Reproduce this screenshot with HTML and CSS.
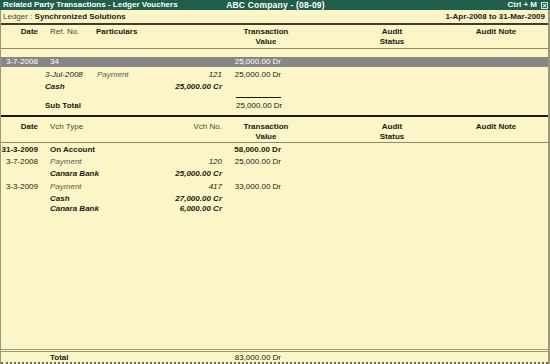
FILE: index.html
```html
<!DOCTYPE html>
<html lang="en">
<head>
	<meta charset="UTF-8">
	<title>Related Party Transactions - Ledger Vouchers</title>
	<link rel="stylesheet" href="styles.css">
</head>
<body>
	<div class="screen">
		<div class="titlebar">
			<span class="t_left">Related Party Transactions - Ledger Vouchers</span>
			<span class="t_mid">ABC Company - (08-09)</span>
			<span class="t_right">Ctrl + M <span class="close">&times;</span></span>
		</div>
		<div class="frame">
			<div class="ledger">
				<span><span class="lbl">Ledger :</span> <b>Synchronized Solutions</b></span>
				<b>1-Apr-2008 to 31-Mar-2009</b>
			</div>

			<!-- 表头1 -->
			<div class="row head">
				<div class="c_date">Date</div>
				<div class="c_ref pl8 light">Ref. No.</div>
				<div class="c_part">Particulars</div>
				<div class="c_val hv">Transaction<br>Value</div>
				<div class="c_sp"></div>
				<div class="c_audit">Audit<br>Status</div>
				<div class="c_note">Audit Note</div>
			</div>

			<div class="sec1">
				<div class="row band">
					<div class="c_date">3-7-2008</div>
					<div class="c_ref pl8">34</div>
					<div class="c_part"></div>
					<div class="c_val">25,000.00 Dr</div>
				</div>
				<div class="row line">
					<div class="c_date"></div>
					<div class="c_ref it">3-Jul-2008</div>
					<div class="c_part split"><span class="it grey">Payment</span><span class="it">121</span></div>
					<div class="c_val">25,000.00 Dr</div>
				</div>
				<div class="row line">
					<div class="c_date"></div>
					<div class="c_ref bi">Cash</div>
					<div class="c_part right bi">25,000.00 Cr</div>
				</div>
				<div class="row line subtotal">
					<div class="c_date"></div>
					<div class="c_ref"><b>Sub Total</b></div>
					<div class="c_part"></div>
					<div class="c_val"><span class="ruled">25,000.00 Dr</span></div>
				</div>
			</div>

			<!-- 表头2 -->
			<div class="row head head2">
				<div class="c_date">Date</div>
				<div class="c_ref pl8 light">Vch Type</div>
				<div class="c_part right light">Vch No.</div>
				<div class="c_val hv">Transaction<br>Value</div>
				<div class="c_sp"></div>
				<div class="c_audit">Audit<br>Status</div>
				<div class="c_note">Audit Note</div>
			</div>

			<div class="sec2">
				<div class="row vch">
					<div class="c_date"><b>31-3-2009</b></div>
					<div class="c_ref pl8 wide"><b>On Account</b></div>
					<div class="c_val"><b>58,000.00 Dr</b></div>
				</div>
				<div class="row vch">
					<div class="c_date">3-7-2008</div>
					<div class="c_ref pl8 it grey">Payment</div>
					<div class="c_part right it">120</div>
					<div class="c_val">25,000.00 Dr</div>
				</div>
				<div class="row line">
					<div class="c_date"></div>
					<div class="c_ref pl8 bi">Canara Bank</div>
					<div class="c_part right bi">25,000.00 Cr</div>
				</div>
				<div class="row vch next">
					<div class="c_date">3-3-2009</div>
					<div class="c_ref pl8 it grey">Payment</div>
					<div class="c_part right it">417</div>
					<div class="c_val">33,000.00 Dr</div>
				</div>
				<div class="row line">
					<div class="c_date"></div>
					<div class="c_ref pl8 bi">Cash</div>
					<div class="c_part right bi">27,000.00 Cr</div>
				</div>
				<div class="row line tight">
					<div class="c_date"></div>
					<div class="c_ref pl8 bi">Canara Bank</div>
					<div class="c_part right bi">6,000.00 Cr</div>
				</div>
			</div>

			<div class="filler"></div>

			<div class="row total">
				<div class="c_date"></div>
				<div class="c_ref pl8"><b>Total</b></div>
				<div class="c_part"></div>
				<div class="c_val">83,000.00 Dr</div>
			</div>
		</div>
	</div>
</body>
</html>
```

FILE: styles.css
```css
body{
	margin:0;
	padding:0;
	font-family:"Liberation Sans", Arial, sans-serif;
	font-size:8px;
	color:#1c1a10;
}

.screen{
	width:550px;
	height:364px;
	display:flex;
	flex-direction:column;
	background-color:#fcf5c7;
}

.titlebar{
	height:10px;
	background-color:#215e4b;
	color:#fff;
	font-weight:bold;
	line-height:10px;
	display:grid;
	grid-template-columns:1fr auto 1fr;
	padding:0 2px 0 3px;
}
.t_mid{
	font-size:8.5px;
	letter-spacing:0.2px;
}
.t_right{
	justify-self:end;
	display:flex;
	align-items:center;
	gap:4px;
}
.close{
	width:7px;
	height:7px;
	border:1px solid #d8e4dc;
	box-sizing:border-box;
	font-size:7px;
	line-height:5px;
	text-align:center;
}

.frame{
	flex:1;
	display:flex;
	flex-direction:column;
	border-left:1px solid #9c987c;
	border-right:2px solid #9c987c;
}

.ledger{
	height:13px;
	line-height:13px;
	display:flex;
	justify-content:space-between;
	padding:0 3px 0 2px;
	border-bottom:2px solid #3e3c30;
}
.lbl{
	color:#4a4838;
}

.row{
	display:grid;
	grid-template-columns:41px 54px 130px 66px 44px 112px 96px;
	line-height:10px;
}
.c_date{
	text-align:right;
	padding-right:4px;
}
.c_ref{
	padding-left:3px;
	white-space:nowrap;
}
.pl8{
	padding-left:8px;
}
.c_part{
	padding-right:4px;
}
.right{
	text-align:right;
}
.split{
	display:flex;
	justify-content:space-between;
	padding-left:1px;
}
.c_val{
	text-align:right;
	padding-right:11px;
	white-space:nowrap;
}
.c_audit,.c_note{
	text-align:center;
}
.wide{
	grid-column:2 / 4;
}

.head{
	font-weight:bold;
	padding:2px 0 1px;
	border-bottom:1px solid #8e8a70;
}
.head .light{
	font-weight:normal;
	color:#4a4838;
}
.head .hv{
	text-align:center;
	padding:0 0 0 14px;
}
.head2{
	border-top:2px solid #1c1a10;
	padding:5px 0 0;
}

.it{
	font-style:italic;
}
.bi{
	font-style:italic;
	font-weight:bold;
}
.grey{
	color:#5c5a4c;
}

.sec1{
	padding:8px 0 4px;
}
.band{
	background-color:#878787;
	color:#fff;
	margin-bottom:1px;
}
.subtotal{
	margin-top:3px;
	align-items:end;
}
.ruled{
	display:block;
	border-top:1px solid #1c1a10;
	margin-left:10px;
	padding-top:3px;
}

.vch{
	padding-top:2px;
}
.next{
	padding-top:3px;
}
.line{
	padding-top:2px;
}
.tight{
	padding-top:0;
}

.filler{
	flex:1;
}

.total{
	border-top:3px double #9c987c;
	border-bottom:2px dotted #6c6a5a;
	line-height:9px;
	padding-top:1px;
}
```
